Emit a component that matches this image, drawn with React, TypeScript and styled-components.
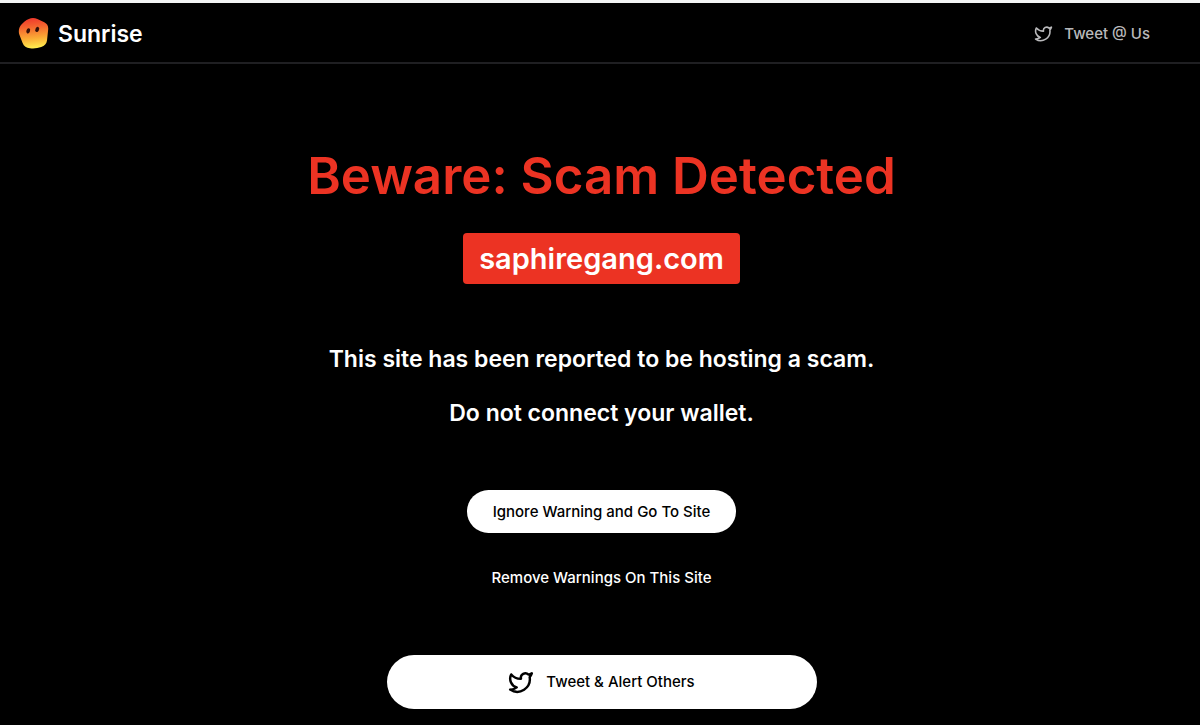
import styled, { createGlobalStyle } from 'styled-components';
import { Twitter } from 'lucide-react';

const GlobalStyle = createGlobalStyle`
  *, *::before, *::after { box-sizing: border-box; }
  html { background: #000; }
  body {
    margin: 0;
    color: #fff;
    background: #000;
    border-top: 3px solid #f3f5f5;
    font-family: Inter, "Liberation Sans", sans-serif;
    font-weight: 600;
  }
  h1, h2, p { margin: 0; }
  button { border: 0; cursor: pointer; }
  a { color: inherit; text-decoration: none; }
`;

const Header = styled.header`
  display: flex;
  align-items: center;
  justify-content: space-between;
  height: 61px;
  padding: 2px 50px 0 18px;
  border-bottom: 2px solid #1f1f22;
`;

const Brand = styled.a`
  display: flex;
  align-items: center;
  gap: 9px;
  font-size: 23px;
  line-height: 30px;
`;

const NavLink = styled.a`
  display: flex;
  align-items: center;
  gap: 11px;
  color: #b9b9bb;
  font-size: 15px;
  line-height: 20px;
  font-weight: 500;
`;

const Main = styled.main`
  display: flex;
  flex-direction: column;
  align-items: center;
  padding: 80px 0 16px 3px;
  text-align: center;
`;

const Title = styled.h1`
  color: #ec3323;
  font-size: 51px;
  line-height: 64px;
  font-weight: 600;
`;

const Domain = styled.h2`
  margin-top: 25px;
  padding: 6px 16px 5px;
  border-radius: 4px;
  background: #ec3323;
  font-size: 29px;
  line-height: 40px;
  font-weight: 600;
`;

const Message = styled.div`
  display: grid;
  gap: 24px;
  margin: 60px 0 62px;
  font-size: 23px;
  line-height: 30px;
`;

const Actions = styled.div`
  display: flex;
  flex-direction: column;
  align-items: center;
  gap: 23px;
  margin-bottom: 56px;
`;

const Button = styled.button<{ $plain?: boolean }>`
  height: 43px;
  padding: 0 26px;
  border-radius: 27px;
  color: ${({ $plain }) => ($plain ? '#fff' : '#000')};
  background: ${({ $plain }) => ($plain ? 'transparent' : '#fff')};
  font-family: inherit;
  font-size: 15px;
  line-height: 20px;
  font-weight: 500;
`;

const TweetButton = styled(Button)`
  display: flex;
  align-items: center;
  justify-content: center;
  gap: 12px;
  width: 430px;
  max-width: 100%;
  height: 54px;
`;

const Logo = () => (
  <svg width="31" height="32" viewBox="0 1 31 32" aria-hidden="true">
    <defs>
      <linearGradient id="sun" x1="0.45" y1="0" x2="0.55" y2="1">
        <stop offset="0" stopColor="#f0392c" />
        <stop offset="0.3" stopColor="#f4672f" />
        <stop offset="0.65" stopColor="#fba935" />
        <stop offset="1" stopColor="#fff04f" />
      </linearGradient>
    </defs>
    <path
      d="M10.8 2C13.3 .8 16.6.8 19.4 2L26.3 5.3C29.2 6.8 30.4 9 30.2 12.2L29 23.6C28.6 27 26.6 29 23.2 30C19.6 31.3 15.6 31.7 12 31.2C8.4 30.7 5.9 29.2 4.6 25.9L1.4 17.8C.3 14.8.7 11 3 8.1C5.2 5.3 7.7 3.3 10.8 2Z"
      fill="url(#sun)"
    />
    <ellipse cx="10.2" cy="13.9" rx="1.8" ry="2.7" transform="rotate(20 10.2 13.9)" fill="#32100a" />
    <ellipse cx="19.2" cy="12.4" rx="1.8" ry="2.7" transform="rotate(24 19.2 12.4)" fill="#32100a" />
  </svg>
);

export default function App() {
  return (
    <>
      <GlobalStyle />
      <Header>
        <Brand href="#">
          <Logo />
          Sunrise
        </Brand>
        <NavLink href="#">
          <Twitter size={19} strokeWidth={2} aria-hidden="true" />
          Tweet @ Us
        </NavLink>
      </Header>
      <Main>
        <Title>Beware: Scam Detected</Title>
        <Domain>saphiregang.com</Domain>
        <Message>
          <p>This site has been reported to be hosting a scam.</p>
          <p>Do not connect your wallet.</p>
        </Message>
        <Actions>
          <Button type="button">Ignore Warning and Go To Site</Button>
          <Button type="button" $plain>Remove Warnings On This Site</Button>
        </Actions>
        <TweetButton type="button">
          <Twitter size={26} strokeWidth={2.25} aria-hidden="true" />
          Tweet &amp; Alert Others
        </TweetButton>
      </Main>
    </>
  );
}
